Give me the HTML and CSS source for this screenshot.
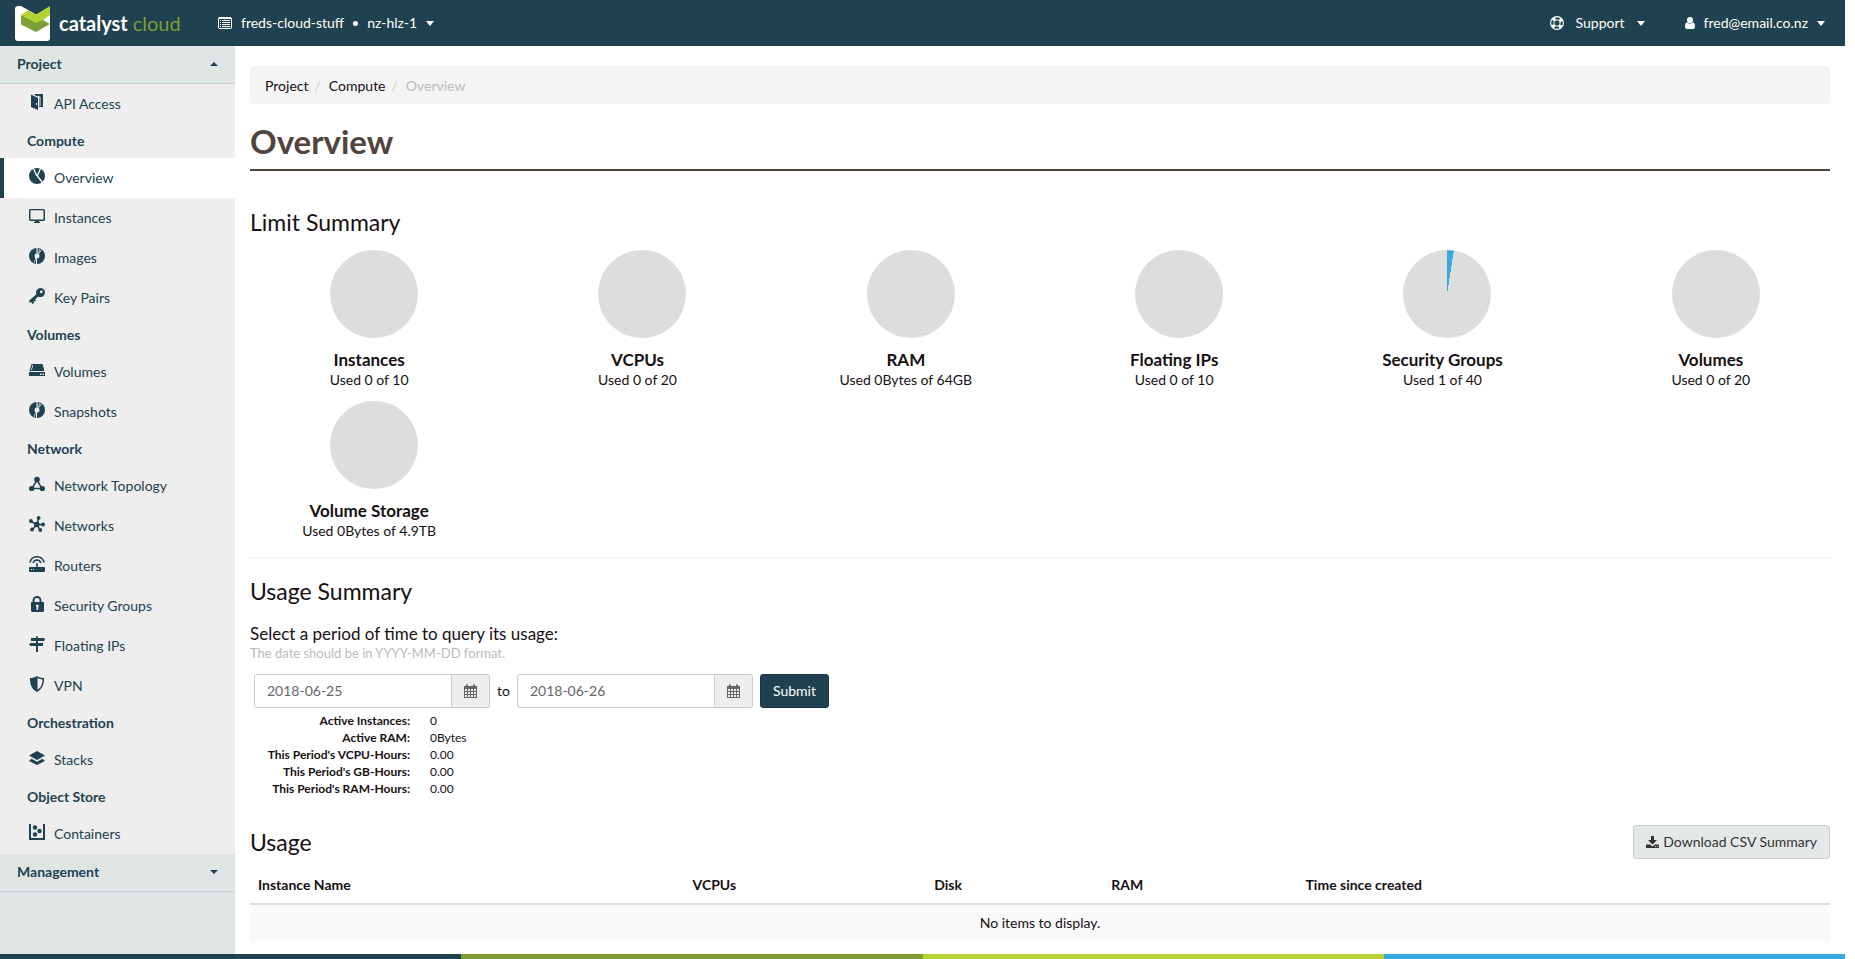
FILE: index.html
```
<!DOCTYPE html>
<html lang="en">
<head>
<meta charset="utf-8">
<title>Overview - Catalyst Cloud</title>
<link rel="stylesheet" href="styles.css">
</head>
<body>
<header class="topbar">
  <a class="brand" href="#">
    <svg class="brand-mark" viewBox="0 0 35 35" aria-hidden="true">
      <path fill="#fff" d="M3 0h3l15 8.500L35 5v27a3 3 0 0 1-3 3H3a3 3 0 0 1-3-3V3a3 3 0 0 1 3-3z"/>
      <path fill="#7f9f35" d="M6 9l15 7 7-2 7 4-14 8-15-7.500z"/>
      <path fill="#b2d235" d="M6 9l7-4.500 8 4L35 0v9l-7 5-7 3z"/>
    </svg>
    <span class="brand-name">catalyst <span class="brand-sub">cloud</span></span>
  </a>
  <button class="menu context" type="button">
    <svg class="ico-list" viewBox="0 0 14 12" aria-hidden="true"><path fill="none" stroke="#fff" d="M1 .5h12l.5.5v10l-.5.5H1l-.5-.5V1z"/><path fill="#fff" d="M1 1h12v1H1zM2 3h1v1H2zM4 3h8v1H4zM2 5h1v1H2zM4 5h8v1H4zM2 7h1v1H2zM4 7h8v1H4zM2 9h1v1H2zM4 9h8v1H4z"/></svg>
    <span>freds-cloud-stuff</span><span class="dot"></span><span>nz-hlz-1</span><span class="caret"></span>
  </button>
  <button class="menu support" type="button">
    <svg class="ico-14" viewBox="0 0 14 14" aria-hidden="true"><circle cx="7" cy="7" r="6.4" fill="none" stroke="#fff" stroke-width="1.1"/><circle cx="7" cy="7" r="3.2" fill="none" stroke="#fff"/><circle cx="7" cy="7" r="4.8" fill="none" stroke="#fff" stroke-width="3" stroke-dasharray="3.2 4.34" stroke-dashoffset="-2.17"/></svg>
    <span>Support</span><span class="caret"></span>
  </button>
  <button class="menu user" type="button">
    <svg class="ico-user" viewBox="0 0 10 12" aria-hidden="true"><path fill="#fff" d="M5 0a3 3 0 0 1 2.8 4.2C7.300 5.500 6.500 6 5 6S2.700 5.500 2.200 4.200A3 3 0 0 1 5 0zM2 5.200C3.500 7 6.500 7 8 5.200c1.500.5 2 2.300 2 4.600C10 11 9.300 12 8 12H2c-1.300 0-2-1-2-2.200 0-2.300.5-4.100 2-4.600z"/></svg>
    <span>fred@email.co.nz</span><span class="caret"></span>
  </button>
</header>

<div class="shell">
  <nav class="sidebar" aria-label="Main">
    <button class="panel" type="button" aria-expanded="true">Project<span class="caret caret-up"></span></button>
    <div class="group">
      <a class="item" href="#"><svg viewBox="0 0 16 16" aria-hidden="true"><path d="M2 .5l7 3.500v12l-7-3zM5.500 0H14v13h-4V3.300L5.500 1z"/><path class="cut" d="M7 9h1v2H7zM9 1.500l2.500 1.600V12h-1V3.800L9 3z"/></svg>API Access</a>
    </div>
    <h2 class="group-title">Compute</h2>
    <div class="group">
      <a class="item active" href="#" aria-current="page"><svg viewBox="0 0 16 16" aria-hidden="true"><circle cx="8" cy="8" r="8"/><path class="gap" d="M4.300 0l3.500 8M8.300 8L11.500.5M8.300 8l5.200 6.500"/></svg>Overview</a>
      <a class="item" href="#"><svg viewBox="0 0 16 16" aria-hidden="true"><path fill-rule="evenodd" d="M1 1h14l1 1v10l-1 1h-5v1h1v1H5v-1h1v-1H1l-1-1V2zM1.500 2.300v9.200h13V2.300z"/></svg>Instances</a>
      <a class="item" href="#"><svg viewBox="0 0 16 16" aria-hidden="true"><circle cx="8" cy="8" r="8"/><path class="cut" d="M8 5.500a2.500 2.500 0 1 1 0 5 2.500 2.500 0 0 1 0-5zM7.500 0h1.200v6H7.500zM7 10h1v6H7zM10.500 1l.7.3L9.600 5.500H9zM4.800 14.800l1.800-5h.6l-1.700 5.300zM12 1.800l.6.5-2.400 3.500-.5-.4z"/></svg>Images</a>
      <a class="item" href="#"><svg viewBox="0 0 16 16" aria-hidden="true"><path fill-rule="evenodd" d="M11.500 0a4.500 4.500 0 1 1-2.300 8.400L6 11.500 7.200 13l-1.700.3-.7-.4.200 2-1.800 1.100-1-2L0 14.500l.5-2.200 6.900-6A4.500 4.500 0 0 1 11.500 0zm.7 2.500a1.400 1.400 0 1 0 .1 2.800 1.400 1.400 0 0 0-.1-2.800z"/></svg>Key Pairs</a>
    </div>
    <h2 class="group-title">Volumes</h2>
    <div class="group">
      <a class="item" href="#"><svg viewBox="0 0 16 16" aria-hidden="true"><path d="M2.500 2h11l2 7H.5zM0 10h16v4H0z"/><path class="cut" d="M3.500 3h.8L2.800 8H2zM11 11.500h1.500V13H11zM13.500 11.500H15V13h-1.500z"/></svg>Volumes</a>
      <a class="item" href="#"><svg viewBox="0 0 16 16" aria-hidden="true"><circle cx="8" cy="8" r="8"/><path class="cut" d="M8 5.500a2.500 2.500 0 1 1 0 5 2.500 2.500 0 0 1 0-5zM7.500 0h1.200v6H7.500zM7 10h1v6H7zM10.500 1l.7.3L9.600 5.500H9zM4.800 14.800l1.800-5h.6l-1.700 5.300zM12 1.800l.6.5-2.400 3.500-.5-.4z"/></svg>Snapshots</a>
    </div>
    <h2 class="group-title">Network</h2>
    <div class="group">
      <a class="item" href="#"><svg viewBox="0 0 16 16" aria-hidden="true"><path class="line" d="M8 4L3 12.500h10z"/><circle cx="8" cy="3.500" r="2.800"/><circle cx="2.600" cy="12.500" r="2.600"/><circle cx="13.400" cy="12.500" r="2.600"/></svg>Network Topology</a>
      <a class="item" href="#"><svg viewBox="0 0 16 16" aria-hidden="true"><path class="line" d="M8 8.500l1.500-6M8 8.500L2 5.500M8 8.500h6M8 8.500l-4.500 5M8 8.500l3 5.500"/><circle cx="7.800" cy="8.500" r="2.800"/><circle cx="9.600" cy="2" r="1.900"/><circle cx="1.900" cy="5" r="1.900"/><circle cx="14.100" cy="8.500" r="1.900"/><circle cx="3" cy="13.500" r="1.900"/><circle cx="11.300" cy="14" r="1.900"/></svg>Networks</a>
      <a class="item" href="#"><svg viewBox="0 0 16 16" aria-hidden="true"><path class="line" d="M.8 6.500C3-1.200 13-1.200 15.200 6.500M4 7c1.500-4 6.500-4 8 0M8 7v5"/><rect y="11" width="16" height="5" rx="1"/><path class="cut" d="M2 13h1v1H2zM4 13h1v1H4z"/></svg>Routers</a>
      <a class="item" href="#"><svg viewBox="0 0 16 16" aria-hidden="true"><path fill-rule="evenodd" d="M2 6h1.500V4.500a4.500 4.500 0 0 1 9 0V6H15v9l-1 1H3l-1-1zm3.500 0h5V4.500a2.500 2.500 0 0 0-5 0z"/><path class="cut" d="M8.300 8.500a1.500 1.500 0 0 1 .9 2.700V14H7.500v-2.800a1.500 1.500 0 0 1 .8-2.700z"/></svg>Security Groups</a>
      <a class="item" href="#"><svg viewBox="0 0 16 16" aria-hidden="true"><path d="M7 1l1-1 1 1v1h6l1 1.500L15 5H9v2h5v3H9v6H7v-6H1.500L0 8.500 1.500 7H7V5H2V2h5z"/></svg>Floating IPs</a>
      <a class="item" href="#"><svg viewBox="0 0 16 16" aria-hidden="true"><path fill-rule="evenodd" d="M8 0c2 1.500 4.500 2 7 2 .2 6-1.500 11-7 14C2.500 13 .8 8 1 2c2.500 0 5-.5 7-2zm.5 2v11.800c3.700-2.300 5-6 5-10.300-1.800-.2-3.500-.6-5-1.500z"/></svg>VPN</a>
    </div>
    <h2 class="group-title">Orchestration</h2>
    <div class="group">
      <a class="item" href="#"><svg viewBox="0 0 16 16" aria-hidden="true"><path d="M8 1l8 4.500L8 10 0 5.500zM2.500 8.800L8 11.800l5.500-3L16 11l-8 4-8-4z"/></svg>Stacks</a>
    </div>
    <h2 class="group-title">Object Store</h2>
    <div class="group">
      <a class="item" href="#"><svg viewBox="0 0 16 16" aria-hidden="true"><path d="M0 0h2v14h12V0h2v16H0z"/><circle cx="6" cy="3.500" r="2.200"/><circle cx="10.500" cy="7" r="2.200"/><circle cx="6" cy="10.500" r="2.200"/></svg>Containers</a>
    </div>
    <button class="panel" type="button" aria-expanded="false">Management<span class="caret"></span></button>
  </nav>

  <main class="content">
    <ol class="crumbs">
      <li><a href="#">Project</a></li>
      <li><a href="#">Compute</a></li>
      <li class="current">Overview</li>
    </ol>
    <h1 class="page-title">Overview</h1>

    <section>
      <h2 class="section-title">Limit Summary</h2>
      <div class="quotas">
        <div class="quota"><div class="pie"></div><strong>Instances</strong><span>Used 0 of 10</span></div>
        <div class="quota"><div class="pie"></div><strong>VCPUs</strong><span>Used 0 of 20</span></div>
        <div class="quota"><div class="pie"></div><strong>RAM</strong><span>Used 0Bytes of 64GB</span></div>
        <div class="quota"><div class="pie"></div><strong>Floating IPs</strong><span>Used 0 of 10</span></div>
        <div class="quota"><div class="pie" style="--used: 2.5%"></div><strong>Security Groups</strong><span>Used 1 of 40</span></div>
        <div class="quota"><div class="pie"></div><strong>Volumes</strong><span>Used 0 of 20</span></div>
        <div class="quota"><div class="pie"></div><strong>Volume Storage</strong><span>Used 0Bytes of 4.9TB</span></div>
      </div>
    </section>

    <section class="usage-summary">
      <h2 class="section-title">Usage Summary</h2>
      <h3 class="query-title">Select a period of time to query its usage:</h3>
      <p class="hint">The date should be in YYYY-MM-DD format.</p>
      <form class="period">
        <div class="date">
          <input id="start" type="text" value="2018-06-25" aria-label="From">
          <label class="addon" for="start"><svg viewBox="0 0 13 14" aria-hidden="true"><path fill-rule="evenodd" d="M0 2h2V1l1-1 1 1v1h5V1l1-1 1 1v1h2v12H0zm1 3v2h2V5zm3 0v2h2V5zm3 0v2h2V5zm3 0v2h2V5zM1 8v2h2V8zm3 0v2h2V8zm3 0v2h2V8zm3 0v2h2V8zM1 11v2h2v-2zm3 0v2h2v-2zm3 0v2h2v-2zm3 0v2h2v-2z"/></svg></label>
        </div>
        <label for="end">to</label>
        <div class="date">
          <input id="end" type="text" value="2018-06-26">
          <label class="addon" for="end"><svg viewBox="0 0 13 14" aria-hidden="true"><path fill-rule="evenodd" d="M0 2h2V1l1-1 1 1v1h5V1l1-1 1 1v1h2v12H0zm1 3v2h2V5zm3 0v2h2V5zm3 0v2h2V5zm3 0v2h2V5zM1 8v2h2V8zm3 0v2h2V8zm3 0v2h2V8zm3 0v2h2V8zM1 11v2h2v-2zm3 0v2h2v-2zm3 0v2h2v-2zm3 0v2h2v-2z"/></svg></label>
        </div>
        <button class="btn primary" type="button">Submit</button>
      </form>
      <dl class="stats">
        <dt>Active Instances:</dt><dd>0</dd>
        <dt>Active RAM:</dt><dd>0Bytes</dd>
        <dt>This Period's VCPU-Hours:</dt><dd>0.00</dd>
        <dt>This Period's GB-Hours:</dt><dd>0.00</dd>
        <dt>This Period's RAM-Hours:</dt><dd>0.00</dd>
      </dl>
    </section>

    <section>
      <div class="table-head">
        <h2 class="section-title">Usage</h2>
        <button class="btn" type="button"><svg class="ico-dl" viewBox="0 0 13 13" aria-hidden="true"><path fill="#333" fill-rule="evenodd" d="M5 0h3v4h3L6.500 8.500 2 4h3zM0 8.500h4l2.500 2 2.500-2h4V12H0zM9 10v1h1v-1zm2 0v1h1v-1z"/></svg>Download CSV Summary</button>
      </div>
      <table class="usage">
        <thead><tr><th class="c-name">Instance Name</th><th class="c-vcpu">VCPUs</th><th class="c-disk">Disk</th><th class="c-ram">RAM</th><th>Time since created</th></tr></thead>
        <tbody><tr><td colspan="5">No items to display.</td></tr></tbody>
      </table>
    </section>
  </main>
</div>
<footer class="stripe"><span class="s1"></span><span class="s2"></span><span class="s3"></span><span class="s4"></span></footer>
</body>
</html>
```
FILE: styles.css
```
* { box-sizing: border-box; }
body {
  display: flex;
  flex-direction: column;
  min-height: 100vh;
  margin: 0 10px 0 0;
  background: #fff;
  color: #161013;
  font: 14px/20px Lato, "Open Sans", sans-serif;
}
h1, h2, h3, p, ol, dl { margin: 0; padding: 0; }
a { color: inherit; text-decoration: none; }
button, input { font: inherit; color: inherit; }

.caret {
  border: 4px solid transparent;
  border-top-color: currentColor;
  border-bottom: 0;
}
.caret-up { border-top: 0; border-bottom: 4px solid currentColor; }

/* Top bar */
.topbar {
  display: flex;
  align-items: center;
  height: 46px;
  padding: 0 20px 0 15px;
  background: #1f4150;
  color: #fff;
}
.topbar .caret { border-top-width: 5px; }
.brand { display: flex; align-items: center; gap: 9px; width: 203px; }
.brand-mark { width: 35px; height: 35px; }
.brand-name { font: bold 20px/24px Lato, sans-serif; }
.brand-sub { color: #7f9f35; font-weight: 400; }
.menu {
  display: flex;
  align-items: center;
  padding: 0;
  border: 0;
  background: none;
}
.context { gap: 9px; }
.support { gap: 12px; margin-left: auto; }
.user { gap: 9px; margin-left: 40px; }
.dot { width: 5px; height: 5px; border-radius: 50%; background: #fff; }
.ico-list { width: 14px; height: 12px; }
.ico-14 { width: 14px; height: 14px; }
.ico-user { width: 10px; height: 12px; }

/* Sidebar */
.shell { display: flex; flex: 1; }
.sidebar { flex: 0 0 235px; background: #dfe5e5; color: #1f4150; }
.panel {
  display: flex;
  align-items: center;
  justify-content: space-between;
  width: 100%;
  height: 38px;
  padding: 0 17px 1px;
  border: 0;
  border-bottom: 1px solid #c8d1d4;
  background: #dfe5e5;
  font-weight: bold;
}
.group { background: #eee; }
.item {
  display: flex;
  align-items: center;
  gap: 9px;
  height: 40px;
  padding-left: 29px;
}
.item.active { padding-left: 25px; border-left: 4px solid #1f4150; background: #fff; }
.item svg { width: 16px; height: 16px; margin-bottom: 4px; fill: #1f4150; }
.item .cut { fill: #eee; }
.item .gap { fill: none; stroke: #fff; stroke-width: 1.3px; }
.item .line { fill: none; stroke: #1f4150; stroke-width: 1.5px; }
.group-title {
  height: 34px;
  padding-left: 27px;
  background: #eee;
  font-size: 14px;
  line-height: 34px;
}

/* Content */
.content { flex: 1; min-width: 0; padding: 20px 15px 13px; }
.crumbs {
  display: flex;
  padding: 10px 15px 8px;
  border-radius: 4px;
  background: #f4f4f4;
  list-style: none;
}
.crumbs li + li::before { content: "/"; padding: 0 8px 0 6px; color: #ccc; }
.crumbs .current { color: #bbb; }
.page-title {
  margin-top: 16px;
  padding-bottom: 7px;
  border-bottom: 2px solid #4d443a;
  color: #51443c;
  font-size: 33px;
  line-height: 42px;
}
.section-title { font-size: 23px; font-weight: 400; line-height: 26px; }
.page-title + section { margin-top: 38px; }

.quotas {
  display: grid;
  grid-template-columns: repeat(6, 1fr);
  margin: 10px -15px 0;
}
.quota {
  display: flex;
  flex-direction: column;
  align-items: center;
  height: 151px;
  padding-top: 5px;
}
.pie {
  --used: 0%;
  flex: none;
  width: 88px;
  height: 88px;
  margin: 0 0 12px 10px;
  border-radius: 50%;
  background: conic-gradient(#35aae0 var(--used), #ddd var(--used));
}
.quota strong { font-size: 17px; line-height: 20px; }

.usage-summary { margin-top: 10px; padding-top: 20px; border-top: 1px solid #eee; }
.query-title { margin-top: 20px; font-size: 17px; font-weight: 400; line-height: 20px; }
.hint { color: #bbb; font-size: 13px; line-height: 18px; }
.period { display: flex; align-items: center; gap: 7px; margin: 12px 4px 4px; }
.date { display: flex; width: 236px; height: 34px; }
.date input {
  flex: 1;
  min-width: 0;
  padding: 0 12px;
  border: 1px solid #ccc;
  border-radius: 3px 0 0 3px;
  background: #fff;
  color: #666;
}
.addon {
  display: flex;
  align-items: center;
  justify-content: center;
  width: 38px;
  border: 1px solid #ccc;
  border-left: 0;
  border-radius: 0 3px 3px 0;
  background: #eee;
}
.addon svg { width: 13px; height: 14px; fill: #666; }
.btn {
  display: flex;
  align-items: center;
  gap: 4px;
  height: 34px;
  padding: 0 12px;
  border: 1px solid #c8cdcd;
  border-radius: 3px;
  background: #e4e8e8;
  color: #333;
}
.btn.primary { border-color: #183440; background: #1f4150; color: #fff; }
.ico-dl { width: 13px; height: 13px; }

.stats {
  display: grid;
  grid-template-columns: 160px 1fr;
  column-gap: 20px;
  font-size: 12px;
  line-height: 17px;
}
.stats dt { font-weight: bold; text-align: right; }
.stats dd { margin: 0; }

.table-head {
  display: flex;
  align-items: center;
  justify-content: space-between;
  margin-top: 28px;
}
.usage { width: 100%; margin-top: 8px; border-collapse: collapse; table-layout: fixed; }
.usage th { padding: 8px 8px; height: 37px; border-bottom: 2px solid #ddd; text-align: left; }
.usage td { padding: 8px; background: #f9f9f9; text-align: center; }
.c-name { width: 27.5%; }
.c-vcpu { width: 15.3%; }
.c-disk { width: 11.2%; }
.c-ram { width: 12.3%; }

.stripe { display: flex; height: 5px; }
.stripe span { flex: 1; }
.s1 { background: #1f4150; }
.s2 { background: #7f9f35; }
.s3 { background: #b2d235; }
.s4 { background: #35aae0; }
```
